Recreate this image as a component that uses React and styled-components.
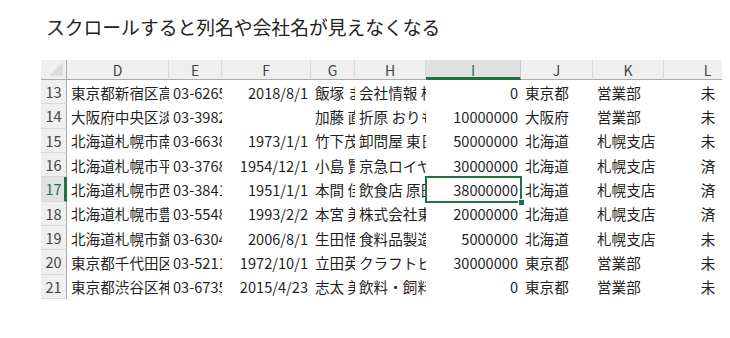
import React from "react";
import styled, { createGlobalStyle } from "styled-components";

const GlobalStyle = createGlobalStyle`
  body {
    margin: 0;
    background: #ffffff;
    font-family: "Noto Sans CJK JP", "Noto Sans", sans-serif;
    color: #1f1f1f;
  }
`;

const Page = styled.div`
  padding: 15px 0 0 41px;
`;

const Title = styled.h1`
  margin: 0 0 21px 5px;
  font-size: 18.8px;
  font-weight: 400;
  line-height: 24px;
  color: #222;
`;

const Sheet = styled.div`
  display: grid;
  grid-template-columns: 26px 102px 53px 89px 44px 71px 95px 72px 71px 88px;
  grid-template-rows: 20px repeat(9, 24.33px);
  width: 681px;
  overflow: hidden;
`;

const Corner = styled.div`
  position: relative;
  background: #efefef;
  border-right: 1px solid #ababab;
  border-bottom: 1px solid #ababab;

  &::after {
    content: "";
    position: absolute;
    right: 3px;
    bottom: 3px;
    border-style: solid;
    border-width: 0 0 14px 14px;
    border-color: transparent transparent #dcdcdc transparent;
  }
`;

const ColHead = styled.div`
  display: flex;
  align-items: center;
  justify-content: center;
  font-size: 14px;
  color: ${(p) => (p.$active ? "#217346" : "#444")};
  background: ${(p) => (p.$active ? "#e1e1e1" : "#efefef")};
  border-right: 1px solid ${(p) => (p.$active ? "#c6c6c6" : "#d9d9d9")};
  border-bottom: ${(p) => (p.$active ? "3px solid #217346" : "1px solid #ababab")};
  box-sizing: border-box;
  padding-top: ${(p) => (p.$active ? "2px" : "0")};
`;

const RowHead = styled.div`
  display: flex;
  align-items: center;
  justify-content: center;
  font-size: 14.5px;
  color: ${(p) => (p.$active ? "#217346" : "#444")};
  background: ${(p) => (p.$active ? "#e1e1e1" : "#efefef")};
  border-right: ${(p) => (p.$active ? "3px solid #217346" : "1px solid #ababab")};
  border-bottom: 1px solid #d9d9d9;
  box-sizing: border-box;
  padding-left: ${(p) => (p.$active ? "2px" : "0")};
`;

const Cell = styled.div`
  position: relative;
  display: flex;
  align-items: center;
  justify-content: ${(p) =>
    p.$align === "right" ? "flex-end" : p.$align === "center" ? "center" : "flex-start"};
  padding: 0 ${(p) => (p.$align === "right" ? "3px" : "0")} 0
    ${(p) => (p.$align === "left" ? "4px" : "0")};
  font-size: 14.6px;
  white-space: nowrap;
  overflow: ${(p) => (p.$selected ? "visible" : "hidden")};
  box-sizing: border-box;
  min-width: 0;

  ${(p) =>
    p.$selected &&
    `
    z-index: 2;
    outline: 2px solid #217346;
    outline-offset: -1px;

    &::after {
      content: "";
      position: absolute;
      right: -4px;
      bottom: -4px;
      width: 5px;
      height: 5px;
      background: #217346;
      border: 1px solid #fff;
    }
  `}
`;

const columns = [
  { key: "D", align: "left" },
  { key: "E", align: "left" },
  { key: "F", align: "right" },
  { key: "G", align: "left" },
  { key: "H", align: "left" },
  { key: "I", align: "right" },
  { key: "J", align: "left" },
  { key: "K", align: "left" },
  { key: "L", align: "center" },
];

const rows = [
  [13, "東京都新宿区高田馬場", "03-6265-1234", "2018/8/1", "飯塚 まり", "会社情報 株式会社", "0", "東京都", "営業部", "未"],
  [14, "大阪府中央区淡路町", "03-3982-5678", "", "加藤 直人", "折原 おりもの店", "10000000", "大阪府", "営業部", "未"],
  [15, "北海道札幌市南区", "03-6638-4321", "1973/1/1", "竹下茂", "卸問屋 東日本", "50000000", "北海道", "札幌支店", "未"],
  [16, "北海道札幌市平岸", "03-3768-8765", "1954/12/1", "小島 賢", "京急ロイヤル", "30000000", "北海道", "札幌支店", "済"],
  [17, "北海道札幌市西区", "03-3841-2345", "1951/1/1", "本間 佳子", "飲食店 原田", "38000000", "北海道", "札幌支店", "済"],
  [18, "北海道札幌市豊平区", "03-5548-6789", "1993/2/2", "本宮 美紀", "株式会社東洋", "20000000", "北海道", "札幌支店", "済"],
  [19, "北海道札幌市錦町", "03-6304-1122", "2006/8/1", "生田悟", "食料品製造所", "5000000", "北海道", "札幌支店", "未"],
  [20, "東京都千代田区神田", "03-5211-3344", "1972/10/1", "立田英二", "クラフトビール", "30000000", "東京都", "営業部", "未"],
  [21, "東京都渋谷区神宮前", "03-6735-5566", "2015/4/23", "志太 美穂", "飲料・飼料販売", "0", "東京都", "営業部", "未"],
];

export default function App() {
  return (
    <>
      <GlobalStyle />
      <Page>
        <Title>スクロールすると列名や会社名が見えなくなる</Title>
        <Sheet>
          <Corner />
          {columns.map((c) => (
            <ColHead key={c.key} $active={c.key === "I"}>
              {c.key}
            </ColHead>
          ))}
          {rows.map(([num, ...values]) => (
            <React.Fragment key={num}>
              <RowHead $active={num === 17}>{num}</RowHead>
              {values.map((v, i) => (
                <Cell
                  key={columns[i].key}
                  $align={columns[i].align}
                  $selected={num === 17 && columns[i].key === "I"}
                >
                  {v}
                </Cell>
              ))}
            </React.Fragment>
          ))}
        </Sheet>
      </Page>
    </>
  );
}
